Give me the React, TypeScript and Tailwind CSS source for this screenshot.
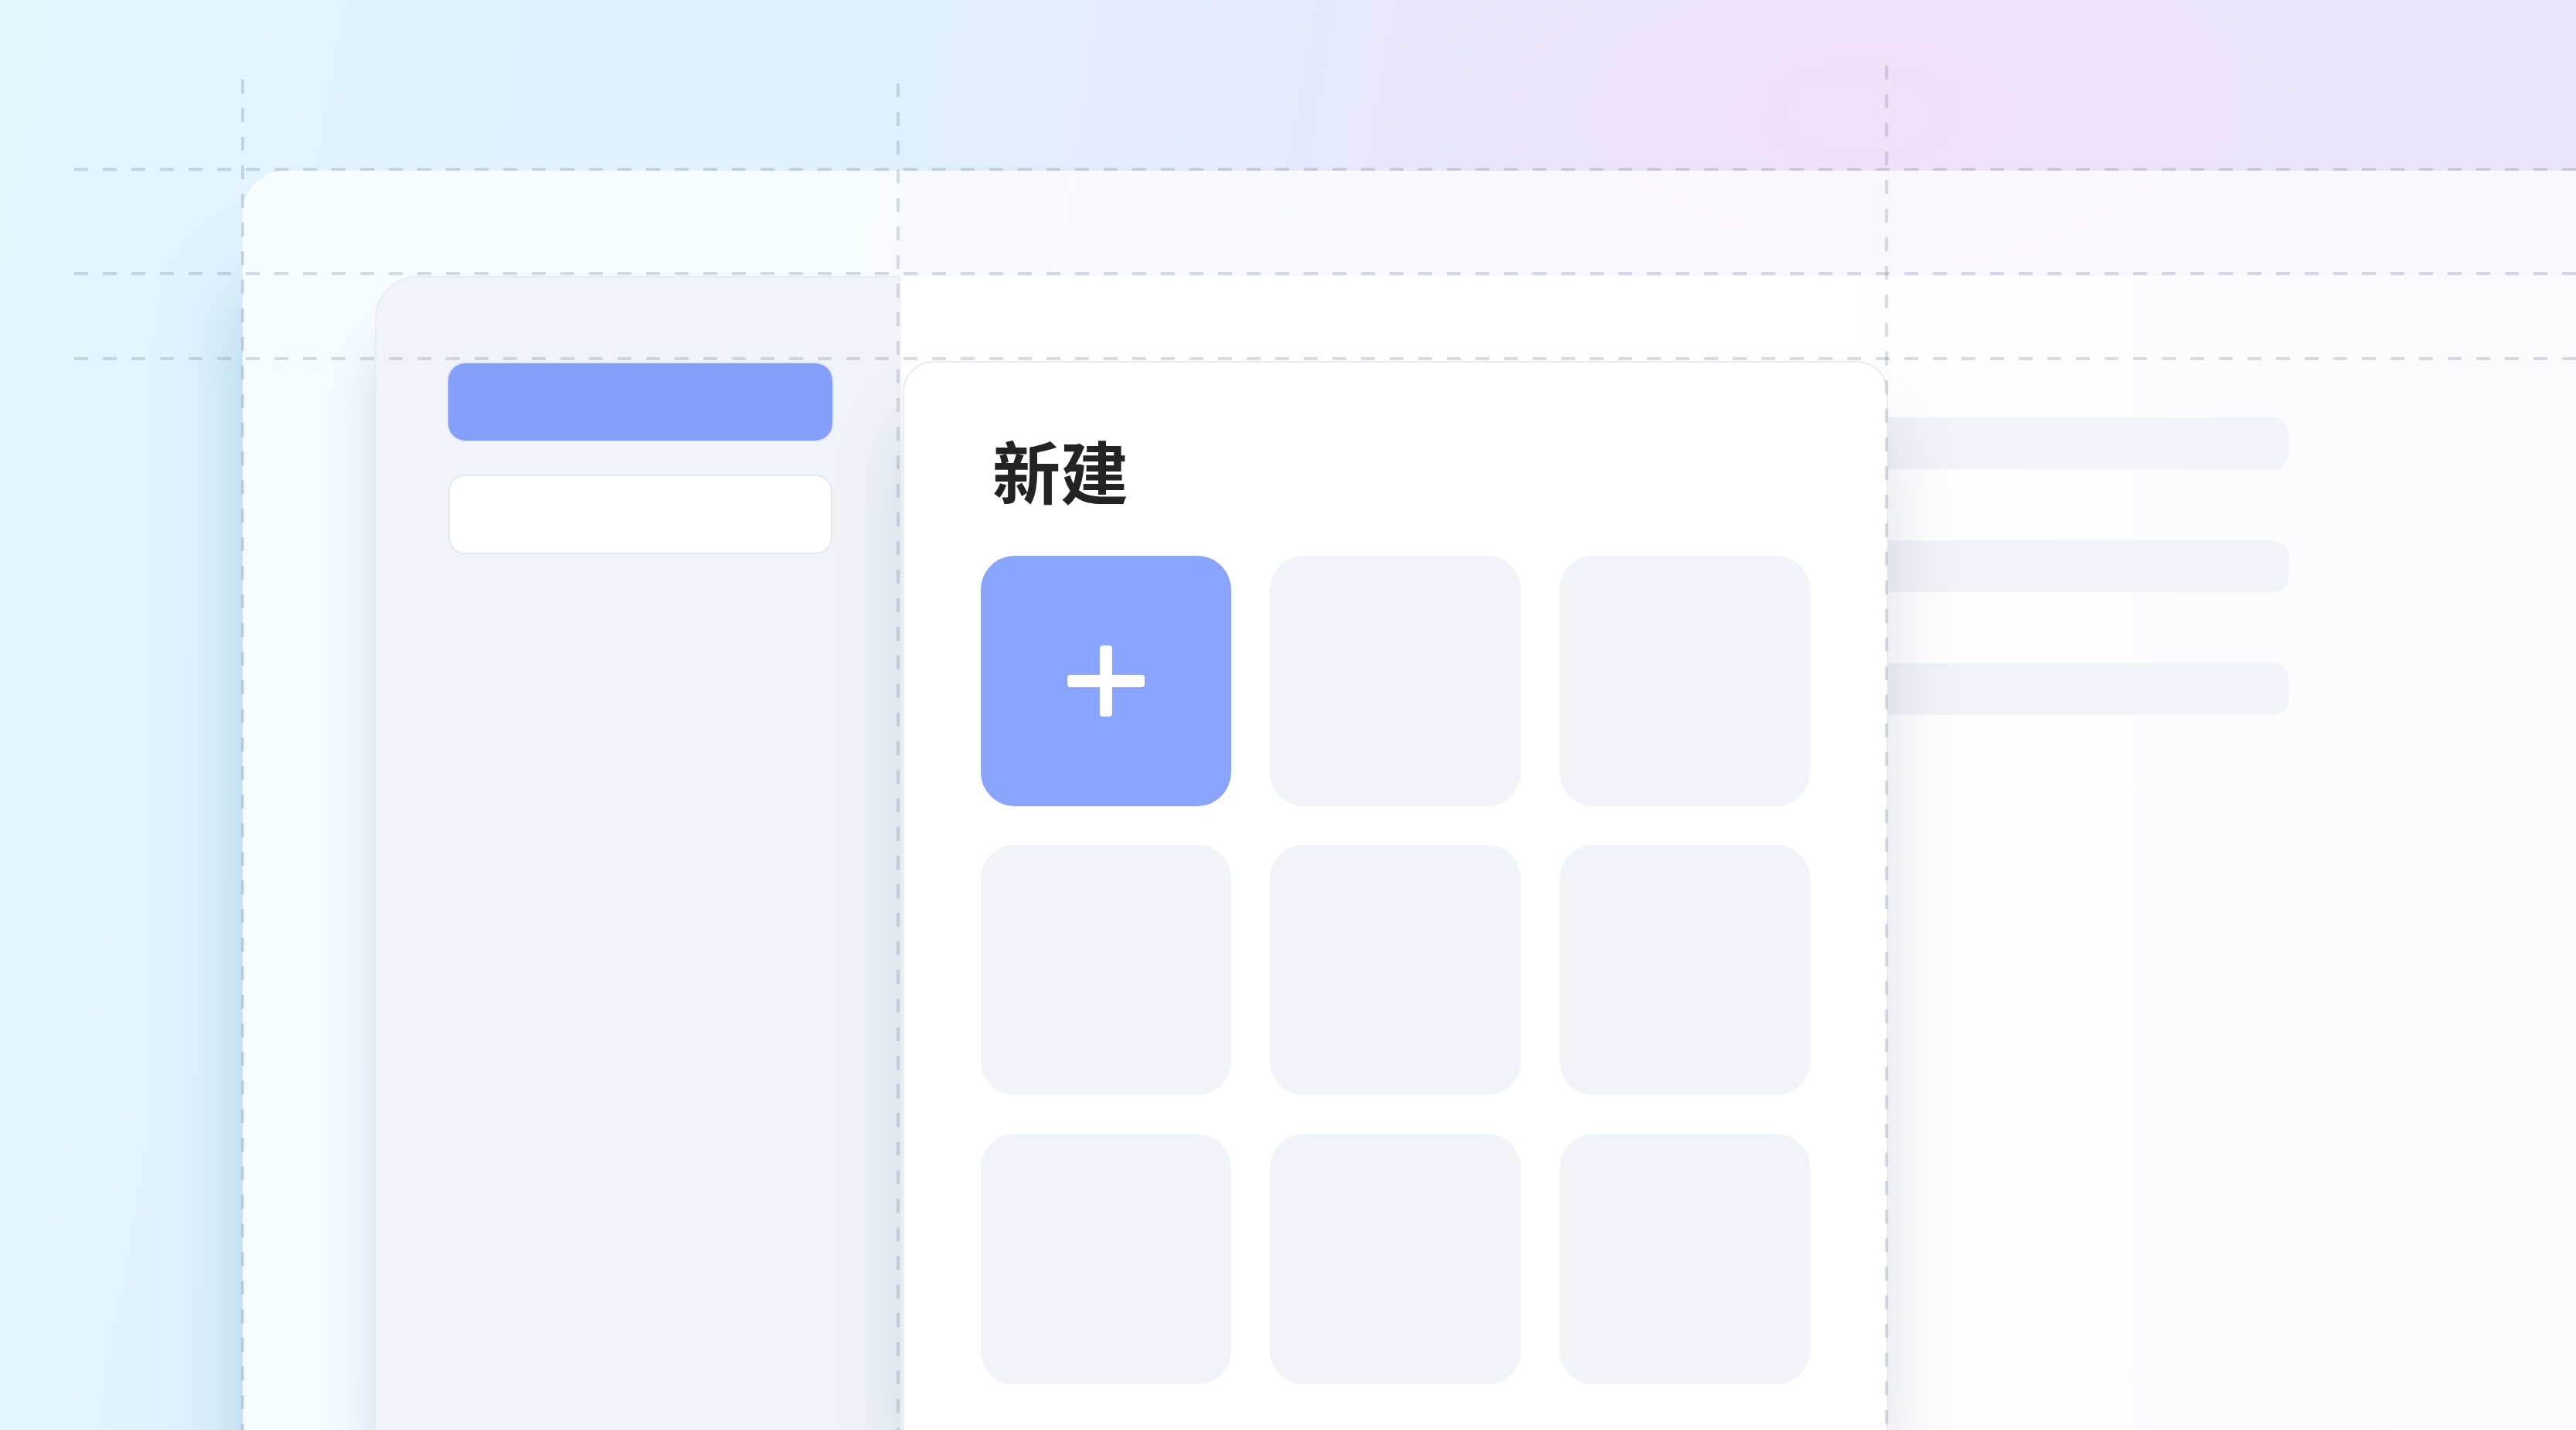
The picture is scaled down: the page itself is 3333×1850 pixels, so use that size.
import React from 'react'

const tiles = [0, 1, 2, 3, 4, 5, 6, 7, 8]

// guide lines drawn on top of the mockup
function Guides() {
  const stroke = 'rgba(110,125,150,0.26)'
  return (
    <svg
      className="absolute inset-0 z-20 pointer-events-none"
      width={3333}
      height={1850}
      viewBox="0 0 3333 1850"
    >
      {[219, 354, 464].map((y) => (
        <line key={y} x1={96} y1={y} x2={3333} y2={y} stroke={stroke} strokeWidth={4} strokeDasharray="18 19" />
      ))}
      <line x1={314} y1={103} x2={314} y2={1850} stroke={stroke} strokeWidth={4} strokeDasharray="18 19" />
      <line x1={1162} y1={108} x2={1162} y2={1850} stroke={stroke} strokeWidth={4} strokeDasharray="18 19" />
      <line x1={2441} y1={85} x2={2441} y2={1850} stroke={stroke} strokeWidth={4} strokeDasharray="18 19" />
    </svg>
  )
}

function PlusIcon() {
  return (
    <svg width={100} height={92} viewBox="0 0 100 92" fill="#ffffff">
      <rect x={0} y={38} width={100} height={16} rx={4} />
      <rect x={42} y={0} width={16} height={92} rx={4} />
    </svg>
  )
}

export default function App() {
  return (
    <div className="relative w-[3333px] h-[1850px] overflow-hidden flex pt-[221px] pl-[314px] bg-[radial-gradient(ellipse_600px_300px_at_72%_8%,#f1e0fa_0%,rgba(241,224,250,0)_100%),linear-gradient(100deg,#e2f6fe_0%,#dff1fd_30%,#e6e8fc_48%,#ebe4fb_68%,#ebe5fb_100%)]">
      {/* window */}
      <div className="flex-1 flex flex-col rounded-tl-[55px] border-t-2 border-white bg-white/70 shadow-[-10px_140px_110px_-10px_rgba(70,140,190,0.35)]">
        <div className="h-[134px] shrink-0" />

        <div className="flex-1 flex">
          <div className="w-[171px] shrink-0" />

          {/* sidebar */}
          <div className="w-[681px] shrink-0 flex flex-col gap-[44px] bg-[#f0f4f8] rounded-tl-[56px] border-t-2 border-l-2 border-[#e7ecf1] pl-[93px] pt-[111px] shadow-[-10px_80px_70px_-10px_rgba(90,120,160,0.22)]">
            <div className="w-[497px] h-[100px] rounded-[22px] bg-[#86a0fa] ring-2 ring-[#e5eaf1]" />
            <div className="w-[497px] h-[103px] rounded-[22px] bg-white border-2 border-[#e3e7ed]" />
          </div>

          {/* content */}
          <div className="flex-1 flex pt-[110px] pl-[2px] bg-[linear-gradient(90deg,#ffffff_0%,#ffffff_55%,#faf9fe_100%)]">
            <div className="relative z-10 w-[1275px] shrink-0 bg-white border-2 border-b-0 border-[#ebebee] rounded-t-[40px] px-[99px] pt-[94px] shadow-[0_70px_100px_-10px_rgba(80,100,145,0.24)]">
              <h1 className="ml-[15px] text-[88px] leading-none font-bold text-[#232323] font-['Noto_Sans_CJK_SC','Noto_Sans',sans-serif]">
                新建
              </h1>
              <div className="mt-[68px] grid grid-cols-3 gap-[50px]">
                {tiles.map((i) =>
                  i === 0 ? (
                    <div key={i} className="h-[324px] rounded-[44px] bg-[#8aa4fc] flex items-center justify-center">
                      <PlusIcon />
                    </div>
                  ) : (
                    <div key={i} className="h-[324px] rounded-[44px] bg-[#f0f3f7]" />
                  )
                )}
              </div>
            </div>

            <div className="w-[518px] shrink-0 flex flex-col gap-[92px] pt-[73px]">
              <div className="h-[67px] rounded-r-[20px] bg-[#f0f3f7]" />
              <div className="h-[67px] rounded-r-[20px] bg-[#f0f3f7]" />
              <div className="h-[67px] rounded-r-[20px] bg-[#f0f3f7]" />
            </div>
          </div>
        </div>
      </div>

      <Guides />
    </div>
  )
}
